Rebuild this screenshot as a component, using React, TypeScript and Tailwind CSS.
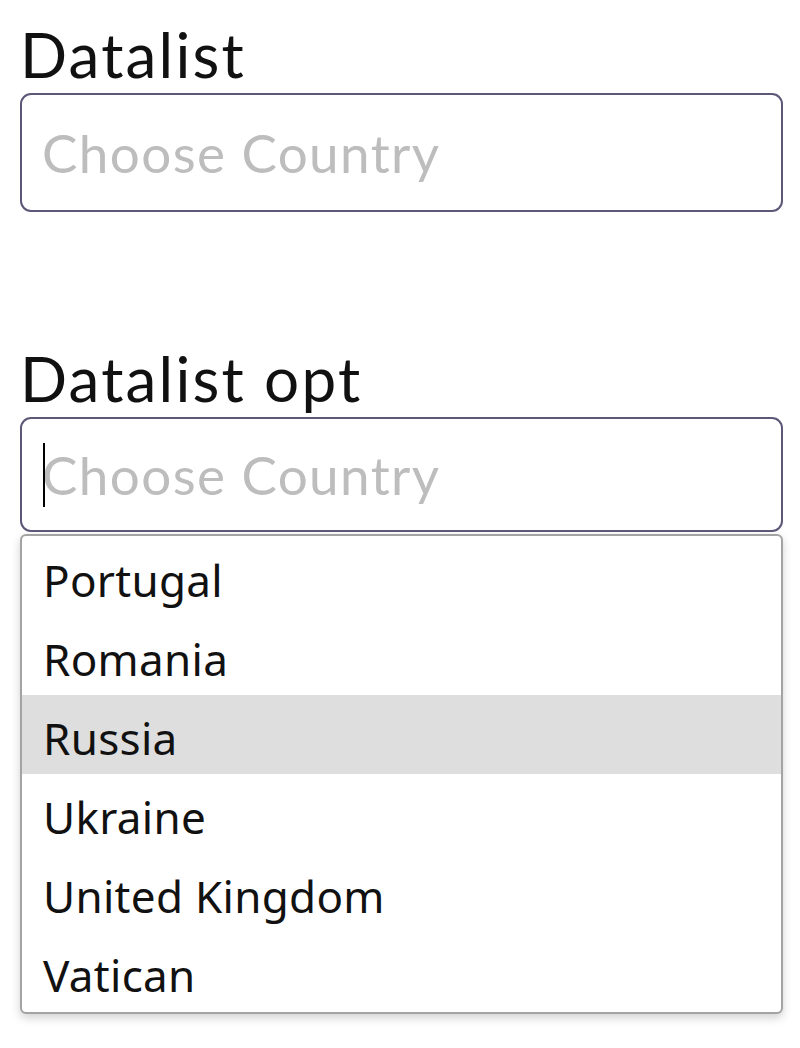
import { useState } from 'react';

const countries = ['Portugal', 'Romania', 'Russia', 'Ukraine', 'United Kingdom', 'Vatican'];

/**
 * Labelled text field styled like the datalist demo.
 */
function Field({ label, focused, tall }: { label: string; focused?: boolean; tall?: boolean }) {
  return (
    <div className="flex flex-col">
      <label className="h-[93px] pt-[14px] text-[62px] leading-[80px] tracking-[2.2px] text-[#111]">
        {label}
      </label>
      <div
        className={`relative rounded-[11px] border-2 border-[#5b5878] bg-white ${
          tall ? 'h-[119px]' : 'h-[115px]'
        }`}
      >
        {focused && <span className="absolute left-[21px] top-[24px] h-[64px] w-[2px] bg-black" />}
        <input
          placeholder="Choose Country"
          className="h-full w-full bg-transparent px-[20px] text-[53px] tracking-[1.4px] text-[#333] outline-none placeholder:text-[#bdbdbd]"
          readOnly
        />
      </div>
    </div>
  );
}

export default function App() {
  const [active] = useState('Russia');

  return (
    <div className="min-h-[1048px] w-[800px] bg-white pl-[20px] pr-[17px] font-['Lato',sans-serif]">
      <Field label="Datalist" tall />
      <div className="h-[112px]" />
      <Field label="Datalist opt" focused />

      {/* Open datalist dropdown */}
      <ul className="mt-[2px] overflow-hidden rounded-[6px] border-2 border-[#a3a3a3] bg-white py-[1px] font-['Noto_Sans',sans-serif] shadow-[0_4px_10px_rgba(0,0,0,0.18)]">
        {countries.map(c => (
          <li
            key={c}
            className={`flex h-[79px] items-center pl-[21px] pt-[6px] text-[44px] tracking-[0.3px] text-[#111] ${
              c === active ? 'bg-[#dedede]' : ''
            }`}
          >
            {c}
          </li>
        ))}
      </ul>
    </div>
  );
}
